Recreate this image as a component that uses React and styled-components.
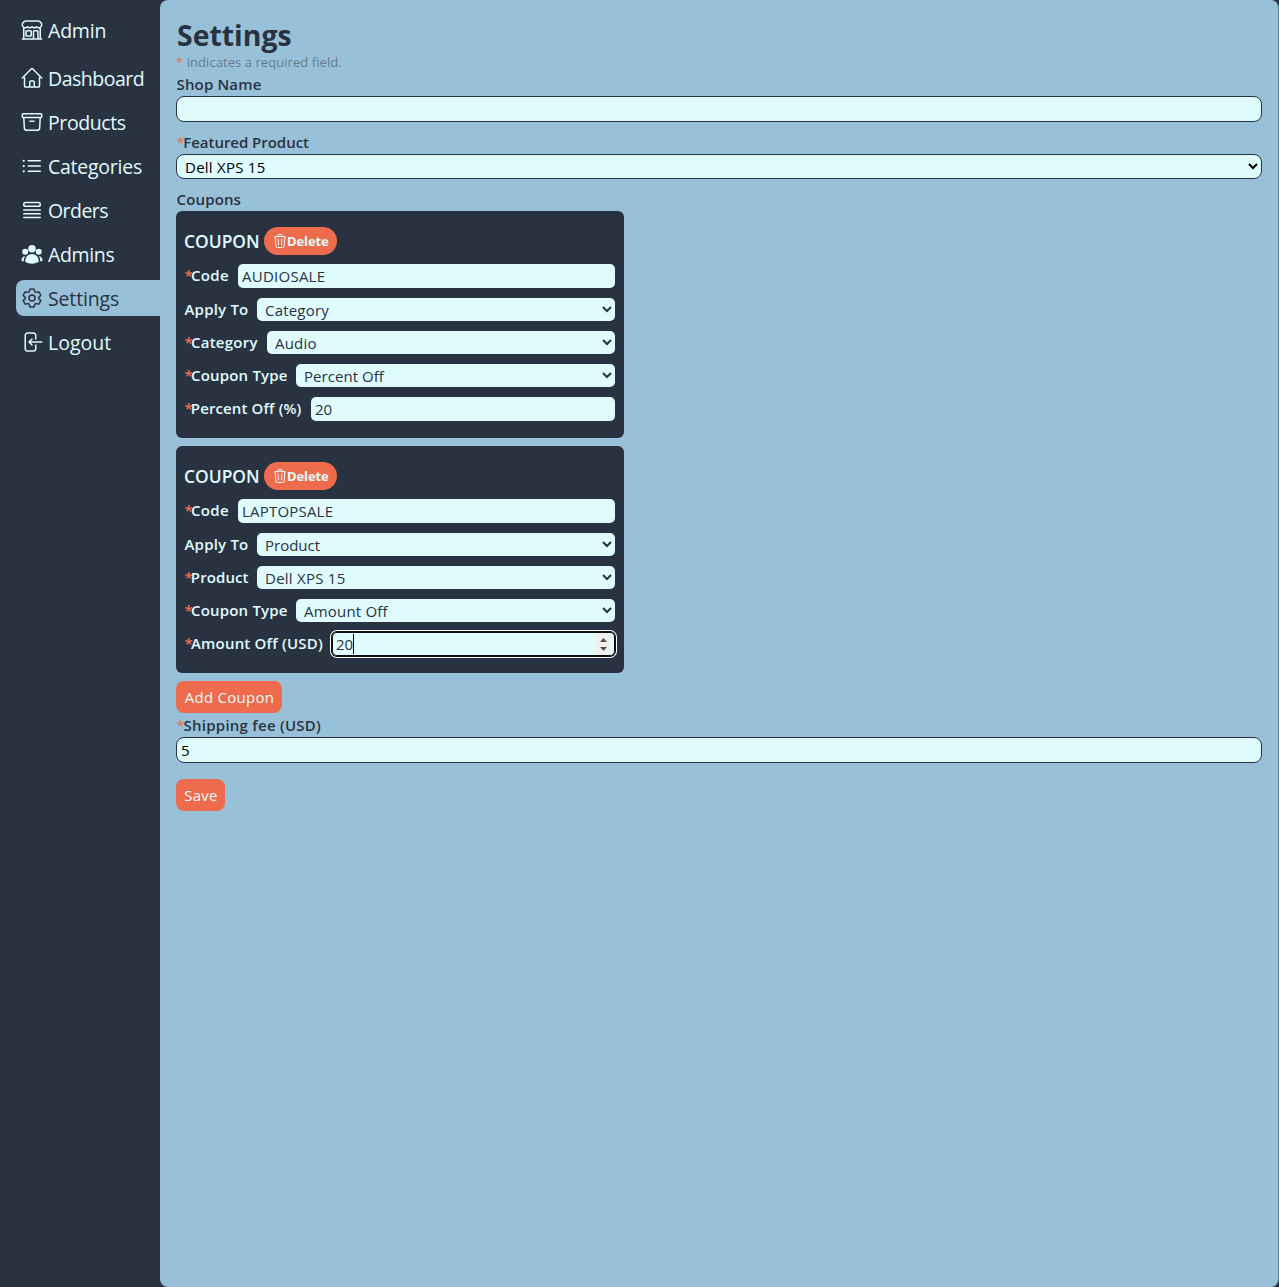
import React from "react";
import styled, { createGlobalStyle } from "styled-components";
import {
  HiOutlineBuildingStorefront,
  HiOutlineHome,
  HiOutlineArchiveBox,
  HiOutlineListBullet,
  HiOutlineQueueList,
  HiUserGroup,
  HiOutlineCog6Tooth,
  HiOutlineTrash,
} from "react-icons/hi2";

const c = {
  dark: "#293241",
  sky: "#98c1d9",
  ice: "#e0fbfc",
  coral: "#ee6c4d",
  edge: "#558296",
};

const GlobalStyle = createGlobalStyle`
  *, *::before, *::after { box-sizing: border-box; }
  body {
    margin: 0;
    background: ${c.dark};
    color: ${c.dark};
    font-family: "Open Sans", "Noto Sans", sans-serif;
    font-size: 16px;
    line-height: 24px;
  }
  input, select, button { font-family: inherit; margin: 0; }
`;

const Shell = styled.div`
  display: flex;
  height: 1287px;
`;

const Sidebar = styled.aside`
  width: 160px;
  flex: none;
  padding: 16px 0 0 16px;
  color: ${c.ice};
`;

const NavLink = styled.a`
  display: flex;
  align-items: center;
  gap: 4px;
  height: ${(p) => (p.$brand ? 28 : 36)}px;
  padding-left: 4px;
  margin-bottom: ${(p) => (p.$brand ? 16 : 8)}px;
  border-radius: 8px 0 0 8px;
  font-size: 19.5px;
  line-height: 28px;
  white-space: nowrap;
  letter-spacing: ${(p) => p.$ls || 0}px;
  color: ${(p) => (p.$active ? c.dark : c.ice)};
  background: ${(p) => (p.$active ? c.sky : "transparent")};

  svg { width: 24px; height: 24px; flex: none; }
  span { padding-top: 1px; }
`;

const Main = styled.main`
  flex: 1;
  min-width: 0;
  padding: 16px 16px 16px;
  border-right: 1px solid ${c.edge};
  border-radius: 8px;
  background: ${c.sky};
`;

const Title = styled.h1`
  margin: 0;
  padding-left: 1px;
  font-size: 28.4px;
  line-height: 38px;
  height: 36px;
  font-weight: 700;
`;

const Note = styled.p`
  margin: 0;
  font-size: 13px;
  line-height: 20px;
  letter-spacing: 0.06px;
  color: rgba(41, 50, 65, 0.5);
`;

const Star = styled.span`
  color: ${c.coral};
  font-weight: 400;
`;

const Label = styled.label`
  display: block;
  height: 24px;
  padding-left: 0.5px;
  font-size: 15px;
  line-height: 25px;
  font-weight: 600;
  letter-spacing: ${(p) => p.$ls || 0}px;
  ${Star} { margin-right: -1.5px; }
`;

const Input = styled.input`
  display: block;
  width: 100%;
  height: 26px;
  padding: 1px 4px;
  border: 1px solid ${c.dark};
  border-radius: 8px;
  outline: none;
  background: ${c.ice};
  color: #000;
  font-size: 15px;
  margin-bottom: ${(p) => p.$gap}px;
`;

const Select = styled.select`
  display: block;
  width: 100%;
  height: 25px;
  padding: 0 1px 0 4px;
  border: 1px solid ${c.dark};
  border-radius: 8px;
  background: ${c.ice};
  color: #000;
  font-size: 15px;
  letter-spacing: 0.25px;
  margin-bottom: 8px;
`;

const Card = styled.section`
  width: 448px;
  height: 227px;
  margin-bottom: 8px;
  padding: 16px 9px 16px 8px;
  border-radius: 6px;
  background: ${c.dark};
  color: ${c.ice};
`;

const CardHead = styled.div`
  display: flex;
  align-items: center;
  height: 28px;
  margin-bottom: 9px;
`;

const CardTitle = styled.h2`
  margin: 0;
  width: 80px;
  font-size: 17.4px;
  line-height: 28px;
  font-weight: 600;
`;

const DeleteButton = styled.button`
  display: flex;
  align-items: center;
  width: 73px;
  height: 28px;
  padding: 0 8px;
  border: 0;
  border-radius: 14px;
  background: ${c.coral};
  color: ${c.ice};
  font-size: 13px;
  font-weight: 700;
  letter-spacing: -0.1px;
  svg { width: 16px; height: 16px; flex: none; margin-right: -1px; }
`;

const Row = styled.div`
  display: flex;
  height: ${(p) => p.$h}px;
  margin-bottom: ${(p) => (p.$last ? 0 : 10)}px;
`;

const RowLabel = styled.label`
  flex: none;
  width: ${(p) => p.$w}px;
  padding-left: 0.5px;
  font-size: 15px;
  line-height: 22px;
  font-weight: 600;
  white-space: nowrap;
  letter-spacing: ${(p) => p.$ls || 0}px;
  ${Star} { margin-right: -2px; font-weight: 600; }
`;

const RowInput = styled.input`
  flex: 1;
  min-width: 0;
  padding: 0 4px;
  border: 0;
  border-radius: 5px;
  outline: none;
  background: ${c.ice};
  color: ${c.dark};
  font-size: 15px;
  letter-spacing: ${(p) => p.$ls || 0}px;
`;

const RowSelect = styled.select`
  flex: 1;
  min-width: 0;
  padding: 1px 1px 0 4px;
  border: 0;
  border-radius: 5px;
  background: ${c.ice};
  color: ${c.dark};
  font-size: 15px;
  letter-spacing: ${(p) => p.$ls || 0}px;
`;

const FocusedNumber = styled.div`
  flex: 1;
  min-width: 0;
  display: flex;
  justify-content: space-between;
  padding: 0 4px 0 4px;
  border-radius: 5px;
  background: ${c.ice};
  color: ${c.dark};
  font-size: 15px;
  box-shadow: inset 0 0 0 1px #101010, 0 0 0 1px #101010, 0 0 0 2px #fff;
`;

const Typed = styled.span`
  height: 20px;
  margin-top: 2px;
  line-height: 20px;
  border-right: 1px solid #000;
`;

const Spinner = styled.span`
  display: flex;
  flex-direction: column;
  align-items: center;
  justify-content: space-around;
  width: 16px;
  margin: 1px 0;
  padding: 2px 0;
  background: #f0f0f0;
`;

const Button = styled.button`
  display: block;
  width: ${(p) => p.$w}px;
  height: 32px;
  padding: 0 0 0 1px;
  border: 0;
  border-radius: 8px;
  background: ${c.coral};
  color: ${c.ice};
  font-size: 15px;
  line-height: 32px;
  letter-spacing: 0.25px;
`;

const LogoutIcon = () => (
  <svg viewBox="0 0 24 24" fill="none" stroke="currentColor" strokeWidth="1.5" strokeLinecap="round" strokeLinejoin="round">
    <path d="M15.75 9V5.25A2.25 2.25 0 0 0 13.5 3h-6a2.25 2.25 0 0 0-2.25 2.25v13.5A2.25 2.25 0 0 0 7.5 21h6a2.25 2.25 0 0 0 2.25-2.25V15M12 9l-3 3m0 0 3 3m-3-3h12.75" />
  </svg>
);

const nav = [
  ["Admin", HiOutlineBuildingStorefront, { $brand: true, $ls: -0.2 }],
  ["Dashboard", HiOutlineHome, { $ls: -0.48 }],
  ["Products", HiOutlineArchiveBox, { $ls: -0.4 }],
  ["Categories", HiOutlineListBullet, { $ls: -0.25 }],
  ["Orders", HiOutlineQueueList, { $ls: -0.55 }],
  ["Admins", HiUserGroup, { $ls: -0.35 }],
  ["Settings", HiOutlineCog6Tooth, { $active: true, $ls: -0.15 }],
  ["Logout", LogoutIcon],
];

const coupons = [
  [
    { label: "Code", req: true, w: 54, ls: 0.3, kind: "text", value: "AUDIOSALE", vls: 0.25 },
    { label: "Apply To", w: 73, ls: 0.2, kind: "select", value: "Category", vls: 0.2 },
    { label: "Category", req: true, w: 83, ls: 0.25, kind: "select", value: "Audio", vls: 0.2 },
    { label: "Coupon Type", req: true, w: 112, ls: 0.2, kind: "select", value: "Percent Off", vls: 0.05 },
    { label: "Percent Off (%)", req: true, w: 127, ls: 0.12, kind: "text", value: "20" },
  ],
  [
    { label: "Code", req: true, w: 54, ls: 0.3, kind: "text", value: "LAPTOPSALE", vls: 0.2 },
    { label: "Apply To", w: 73, ls: 0.2, kind: "select", value: "Product", vls: 0 },
    { label: "Product", req: true, w: 73, ls: 0.1, kind: "select", value: "Dell XPS 15", vls: 0.25 },
    { label: "Coupon Type", req: true, w: 112, ls: 0.2, kind: "select", value: "Amount Off", vls: 0.2 },
    { label: "Amount Off (USD)", req: true, w: 148, ls: 0.2, kind: "focused", value: "20" },
  ],
];

function Field({ kind, value, vls }) {
  if (kind === "select") {
    return (
      <RowSelect $ls={vls} defaultValue={value}>
        <option>{value}</option>
      </RowSelect>
    );
  }
  if (kind === "focused") {
    return (
      <FocusedNumber>
        <Typed>{value}</Typed>
        <Spinner>
          <svg width="7" height="4" viewBox="0 0 7 4"><path d="M0 4 3.5 0 7 4z" fill="#505050" /></svg>
          <svg width="7" height="4" viewBox="0 0 7 4"><path d="M0 0 3.5 4 7 0z" fill="#505050" /></svg>
        </Spinner>
      </FocusedNumber>
    );
  }
  return <RowInput $ls={vls} defaultValue={value} />;
}

function Coupon({ rows }) {
  return (
    <Card>
      <CardHead>
        <CardTitle>COUPON</CardTitle>
        <DeleteButton><HiOutlineTrash />Delete</DeleteButton>
      </CardHead>
      {rows.map((r, i) => (
        <Row key={r.label} $h={r.kind === "select" ? 23 : 24} $last={i === rows.length - 1}>
          <RowLabel $w={r.w} $ls={r.ls}>{r.req && <Star>*</Star>}{r.label}</RowLabel>
          <Field kind={r.kind} value={r.value} vls={r.vls} />
        </Row>
      ))}
    </Card>
  );
}

export default function App() {
  return (
    <>
      <GlobalStyle />
      <Shell>
        <Sidebar>
          {nav.map(([name, Icon, flags]) => (
            <NavLink key={name} {...flags}><Icon /><span>{name}</span></NavLink>
          ))}
        </Sidebar>
        <Main>
          <Title>Settings</Title>
          <Note><Star>*</Star> indicates a required field.</Note>
          <Label $ls={0.15}>Shop Name</Label>
          <Input $gap={8} />
          <Label $ls={-0.03}><Star>*</Star>Featured Product</Label>
          <Select><option>Dell XPS 15</option></Select>
          <Label $ls={0.15}>Coupons</Label>
          {coupons.map((rows, i) => <Coupon key={i} rows={rows} />)}
          <Button $w={106}>Add Coupon</Button>
          <Label $ls={0.25}><Star>*</Star>Shipping fee (USD)</Label>
          <Input $gap={16} defaultValue="5" />
          <Button $w={49}>Save</Button>
        </Main>
      </Shell>
    </>
  );
}
